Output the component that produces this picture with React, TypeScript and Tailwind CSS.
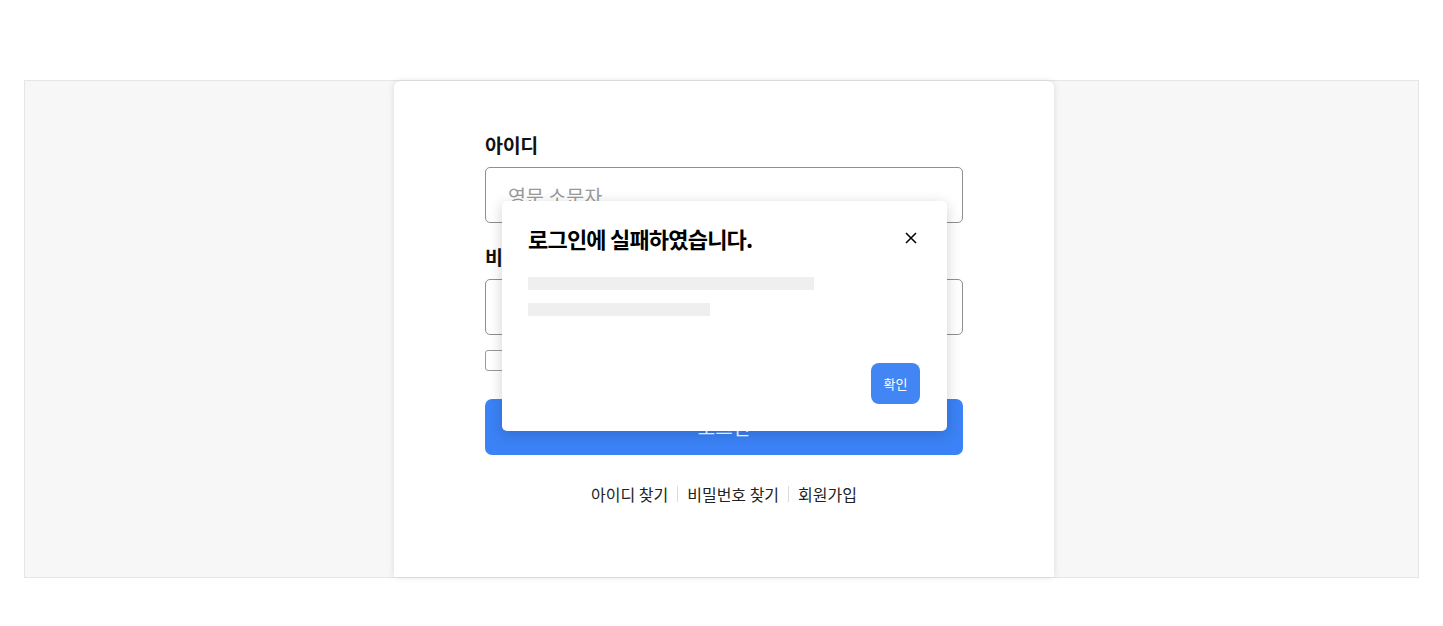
const FONT = { fontFamily: '"Noto Sans CJK KR", "Noto Sans", sans-serif' };

function Field({ label, placeholder, type = "text" }: { label: string; placeholder?: string; type?: string }) {
	return (
		<div className="flex flex-col">
			<label className="text-[19.5px] leading-[30px] font-bold text-[#111] tracking-[-0.3px]">{label}</label>
			<input
				type={type}
				placeholder={placeholder}
				className="mt-[7px] h-[56px] w-full rounded-[5px] border border-[#8f8f8f] bg-white px-[22px] text-[19.5px] text-[#222] outline-none placeholder:text-[#9a9a9a]"
			/>
		</div>
	);
}

function FailModal() {
	return (
		<div className="absolute left-[108px] top-[120px] flex h-[230px] w-[445px] flex-col rounded-[5px] bg-white px-[26px] pt-[22px] pb-[27px] shadow-[0_3px_14px_rgba(0,0,0,0.18)]">
			<div className="flex items-start justify-between">
				<h2 className="text-[22px] leading-[30px] font-bold tracking-[-0.8px] text-black">로그인에 실패하였습니다.</h2>
				<button className="mt-[9px] mr-[4px] text-black">
					<svg width="12" height="12" viewBox="0 0 12 12" fill="none" stroke="currentColor" strokeWidth="1.5">
						<path d="M1 1L11 11M11 1L1 11" />
					</svg>
				</button>
			</div>
			<div className="mt-[24px] flex flex-col gap-[13px]">
				<div className="h-[13px] w-[286px] bg-[#efefef]" />
				<div className="h-[13px] w-[182px] bg-[#efefef]" />
			</div>
			<div className="mt-auto flex justify-end">
				<button className="mr-[1px] h-[41px] w-[49px] rounded-[8px] bg-[#4285f4] text-[13px] text-white">확인</button>
			</div>
		</div>
	);
}

export default function App() {
	return (
		<div className="min-h-screen bg-white pt-[80px] px-[24px]" style={FONT}>
			<div className="flex h-[498px] justify-center border border-[#e6e6e6] bg-[#f7f7f7]">
				<div className="relative ml-[5px] flex w-[660px] flex-col items-center rounded-t-[6px] bg-white pt-[49px] shadow-[0_0_6px_rgba(0,0,0,0.12)]">
					<div className="flex w-[478px] flex-col">
						<Field label="아이디" placeholder="영문 소문자" />
						<div className="mt-[19px]">
							<Field label="비밀번호" type="password" />
						</div>
						<label className="mt-[15px] flex h-[21px] items-center gap-[8px] text-[16px] leading-[21px] text-[#333]">
							<span className="h-[21px] w-[21px] rounded-[3px] border border-[#9a9a9a] bg-white" />
							아이디 저장
						</label>
						<button className="mt-[28px] h-[56px] w-full rounded-[7px] bg-[#3b82f6] text-[19px] text-white">로그인</button>
						<div className="mt-[27px] flex items-center justify-center text-[16px] leading-[24px] text-[#222]">
							<a className="px-[9px]">아이디 찾기</a>
							<span className="h-[16px] w-px bg-[#dcdcdc]" />
							<a className="px-[9px]">비밀번호 찾기</a>
							<span className="h-[16px] w-px bg-[#dcdcdc]" />
							<a className="px-[9px]">회원가입</a>
						</div>
					</div>
					<FailModal />
				</div>
			</div>
		</div>
	);
}
